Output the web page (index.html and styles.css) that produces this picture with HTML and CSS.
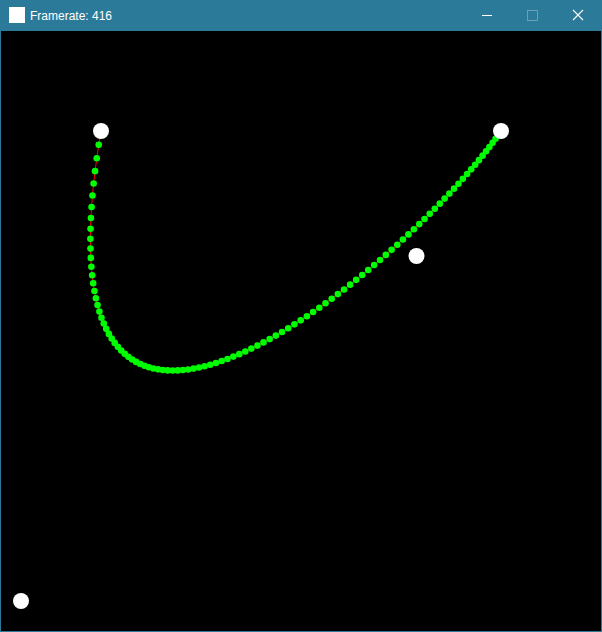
FILE: index.html
```html
<!DOCTYPE html>
<html>
<head>
<meta charset="utf-8">
<link rel="stylesheet" href="styles.css">
</head>
<body>
<div class="window">
  <div class="titlebar">
    <div class="app-icon"></div>
    <span class="title">Framerate: 416</span>
    <div class="controls">
      <div class="btn"><svg width="46" height="31" viewBox="0 0 46 31"><rect x="18" y="15" width="10" height="1" fill="#ffffff"/></svg></div>
      <div class="btn"><svg width="46" height="31" viewBox="0 0 46 31"><rect x="17.5" y="10.5" width="10" height="10" fill="none" stroke="#6aa0b6" stroke-width="1"/></svg></div>
      <div class="btn"><svg width="46" height="31" viewBox="0 0 46 31"><path d="M17 10 L27 20 M27 10 L17 20" stroke="#ffffff" stroke-width="1.1" fill="none"/></svg></div>
    </div>
  </div>
  <div class="client">
    <svg id="scene" class="scene" width="600" height="600" viewBox="0 0 600 600"></svg>
  </div>
</div>
<script src="script.js"></script>
</body>
</html>
```

FILE: styles.css
```css
html, body {
  margin: 0;
  padding: 0;
  background: #000000;
}
.window {
  width: 602px;
  height: 632px;
  display: flex;
  flex-direction: column;
  background: #2b7a99;
}
.titlebar {
  height: 31px;
  display: flex;
  align-items: center;
  padding-left: 9px;
  background: #2b7a99;
  color: #ffffff;
  font-family: "Liberation Sans", Arial, sans-serif;
  font-size: 12px;
}
.app-icon {
  width: 16px;
  height: 16px;
  background: #ffffff;
  margin-right: 5px;
  margin-top: -1px;
}
.title {
  flex: 1;
  white-space: nowrap;
}
.controls {
  display: flex;
  height: 31px;
}
.btn {
  width: 46px;
  height: 31px;
}
.btn svg {
  display: block;
}
.client {
  border: 1px solid #2b7a99;
  border-top: 0;
  width: 600px;
  height: 600px;
  background: #000000;
}
.scene {
  display: block;
  background: #000000;
}
```

FILE: script.js
```js
(function () {
  var svg = document.getElementById('scene');
  var NS = 'http://www.w3.org/2000/svg';
  var p0 = [100, 100], p1 = [20, 570], p2 = [415.5, 225], p3 = [500, 100];
  var pts = [];
  for (var i = 0; i <= 100; i++) {
    var t = i / 100, u = 1 - t;
    var a = u * u * u, b = 3 * t * u * u, c = 3 * t * t * u, d = t * t * t;
    pts.push([a * p0[0] + b * p1[0] + c * p2[0] + d * p3[0],
              a * p0[1] + b * p1[1] + c * p2[1] + d * p3[1]]);
  }
  var line = document.createElementNS(NS, 'polyline');
  line.setAttribute('points', pts.map(function (p) { return p[0].toFixed(2) + ',' + p[1].toFixed(2); }).join(' '));
  line.setAttribute('fill', 'none');
  line.setAttribute('stroke', '#ff0000');
  line.setAttribute('stroke-width', '1');
  svg.appendChild(line);
  pts.forEach(function (p) {
    var c = document.createElementNS(NS, 'circle');
    c.setAttribute('cx', p[0].toFixed(2));
    c.setAttribute('cy', p[1].toFixed(2));
    c.setAttribute('r', '3.3');
    c.setAttribute('fill', '#00ff00');
    svg.appendChild(c);
  });
  [p0, p1, p2, p3].forEach(function (p) {
    var c = document.createElementNS(NS, 'circle');
    c.setAttribute('cx', p[0]);
    c.setAttribute('cy', p[1]);
    c.setAttribute('r', '8');
    c.setAttribute('fill', '#ffffff');
    svg.appendChild(c);
  });
})();
```
